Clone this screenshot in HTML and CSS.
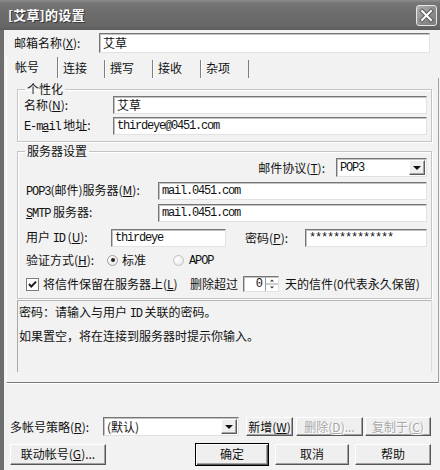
FILE: index.html
```html
<!DOCTYPE html>
<html lang="zh-CN">
<head>
<meta charset="utf-8">
<title>[艾草]的设置</title>
<link rel="stylesheet" href="styles.css">
</head>
<body>
<div class="window">
  <div class="titlebar">
    <span class="title">[艾草]的设置</span>
    <span class="close-btn">
      <svg width="21" height="21" viewBox="0 0 21 21">
        <path d="M6 6 L15 15 M15 6 L6 15" stroke="#5a5a5a" stroke-width="4" stroke-linecap="square"/>
        <path d="M6 6 L15 15 M15 6 L6 15" stroke="#ffffff" stroke-width="2" stroke-linecap="square"/>
      </svg>
    </span>
  </div>
  <div class="frame">
    <div class="row row-mailbox">
      <span class="lbl w-mailbox">邮箱名称(<u>X</u>):</span>
      <span class="field f-mailbox">艾草</span>
    </div>
    <div class="tabs">
      <span class="tab tab-active">帐号</span>
      <span class="tab tab-w47">连接</span>
      <span class="tab">撰写</span>
      <span class="tab">接收</span>
      <span class="tab">杂项</span>
    </div>
    <div class="panel">
      <fieldset class="group g-personal">
        <legend>个性化</legend>
        <div class="frow">
          <span class="lbl w-g1">名称(<u>N</u>):</span>
          <span class="field f-g1">艾草</span>
        </div>
        <div class="frow gap3">
          <span class="lbl w-g1"><span class="lat">E-m<u>a</u>il</span> 地址:</span>
          <span class="field f-g1"><span class="mono">thirdeye@0451.com</span></span>
        </div>
      </fieldset>
      <fieldset class="group g-server">
        <legend>服务器设置</legend>
        <div class="frow frow2 row-proto">
          <span class="lbl">邮件协议(<u>T</u>):</span>
          <span class="field select f-proto">
            <span class="mono sel-text">POP3</span>
            <span class="drop-btn"><span class="tri"></span></span>
          </span>
        </div>
        <div class="frow frow2 gap5">
          <span class="lbl w-pop"><span class="lat">POP3</span>(邮件)服务器(<u>M</u>):</span>
          <span class="field f-pop"><span class="mono">mail.0451.com</span></span>
        </div>
        <div class="frow frow2 gap4">
          <span class="lbl w-pop"><span class="lat"><u>S</u>MTP</span> 服务器:</span>
          <span class="field f-pop"><span class="mono">mail.0451.com</span></span>
        </div>
        <div class="frow frow2 gap7">
          <span class="lbl w-user">用户 <span class="lat">ID</span> (<u>U</u>):</span>
          <span class="field f-user"><span class="mono">thirdeye</span></span>
          <span class="lbl w-pass">密码(<u>P</u>):</span>
          <span class="field f-pass"><span class="mono">**************</span></span>
        </div>
        <div class="frow frow2 gap5 row-auth">
          <span class="lbl w-auth">验证方式(<u>H</u>):</span>
          <span class="radio radio-on"></span>
          <span class="opt">标准</span>
          <span class="radio radio-2"></span>
          <span class="opt"><span class="lat">APOP</span></span>
        </div>
        <div class="frow frow2 gap8 row-keep">
          <span class="checkbox">
            <svg width="13" height="13" viewBox="0 0 13 13">
              <rect x="0.5" y="0.5" width="12" height="12" fill="#ffffff" stroke="#7c7c7c"/>
              <path d="M3 6 L5.3 8.6 L10 3.6" fill="none" stroke="#1a1a1a" stroke-width="2"/>
            </svg>
          </span>
          <span class="keep-text">将信件保留在服务器上(<u>L</u>)</span>
          <span class="del-text">删除超过</span>
          <span class="field spin">
            <span class="spin-val">0</span>
            <span class="spin-btns">
              <svg width="13" height="14" viewBox="0 0 13 14">
                <line x1="0.5" y1="0" x2="0.5" y2="14" stroke="#9a9a9a"/>
                <line x1="1" y1="7" x2="13" y2="7" stroke="#9a9a9a"/>
                <path d="M5 4.5 L7 2.5 L9 4.5 Z" fill="#333"/>
                <path d="M5 9.5 L7 11.5 L9 9.5 Z" fill="#333"/>
              </svg>
            </span>
          </span>
          <span class="days-text">天的信件(0代表永久保留)</span>
        </div>
      </fieldset>
      <div class="desc">
        <p>密码：请输入与用户 <span class="lat">ID</span> 关联的密码。</p>
        <p>如果置空，将在连接到服务器时提示你输入。</p>
      </div>
    </div>
    <div class="row row-strategy">
      <span class="lbl w-strategy">多帐号策略(<u>R</u>):</span>
      <span class="field select f-strategy">
        <span class="sel-text">(默认)</span>
        <span class="drop-btn"><span class="tri"></span></span>
      </span>
      <span class="btn b-new">新增(<u>W</u>)</span>
      <span class="btn disabled b-del">删除(<u>D</u>)...</span>
      <span class="btn disabled b-copy">复制于(<u>C</u>)</span>
    </div>
    <div class="row row-buttons">
      <span class="btn b-link">联动帐号(<u>G</u>)...</span>
      <span class="btn default b-ok">确定</span>
      <span class="btn b-cancel">取消</span>
      <span class="btn b-help">帮助</span>
    </div>
  </div>
</div>
</body>
</html>
```

FILE: styles.css
```css
* {
  box-sizing: border-box;
}

html, body {
  margin: 0;
  padding: 0;
  background: #f2f2f2;
}

body {
  font-family: "Noto Sans CJK SC", "Noto Sans", sans-serif;
  font-size: 12px;
  line-height: 14px;
  color: #111;
}

u {
  text-decoration: underline;
  text-underline-offset: 1px;
}

.window {
  width: 440px;
  height: 470px;
  display: flex;
  flex-direction: column;
  overflow: hidden;
}

/* title bar */
.titlebar {
  height: 30px;
  flex: none;
  display: flex;
  align-items: center;
  justify-content: space-between;
  padding: 0 3px 0 8px;
  background: linear-gradient(#8e8e8e 0, #767676 3px, #6c6c6c 14px, #676767 26px, #5c5c5c 30px);
}

.title {
  color: #ffffff;
  font-weight: 700;
  font-size: 13px;
  letter-spacing: 0.3px;
  text-shadow: 1px 1px 0 #3a3a3a;
}

.close-btn {
  width: 21px;
  height: 21px;
  border: 1px solid #e6e6e6;
  border-radius: 3px;
  background: linear-gradient(135deg, #b0b0b0, #8a8a8a 60%, #7a7a7a);
  display: flex;
  align-items: center;
  justify-content: center;
  margin-top: 1px;
}

.close-btn svg {
  display: block;
  margin: -1px;
}

/* frame */
.frame {
  flex: 1;
  border-left: 4px solid #6e6e6e;
  background: #f2f2f2;
  display: flex;
  flex-direction: column;
}

.row {
  display: flex;
  align-items: center;
  flex: none;
}

.lbl {
  white-space: nowrap;
  flex: none;
}

.lat {
  font-family: "Liberation Mono", monospace;
  font-size: 12px;
  letter-spacing: -1.1px;
}

.mono {
  font-family: "Liberation Mono", monospace;
  font-size: 12px;
  letter-spacing: -1.2px;
}

.field {
  flex: none;
  display: flex;
  align-items: center;
  height: 18px;
  background: #ffffff;
  border: 1px solid;
  border-color: #767676 #e2e2e2 #e2e2e2 #767676;
  box-shadow: inset 1px 1px 0 #c2c2c2;
  padding-left: 3px;
  white-space: nowrap;
  overflow: hidden;
}

/* mailbox row */
.row-mailbox {
  margin-top: 3px;
  height: 20px;
  padding-left: 10px;
}

.w-mailbox {
  width: 85px;
}

.f-mailbox {
  width: 331px;
  height: 20px;
}

/* tabs */
.tabs {
  flex: none;
  display: flex;
  height: 21px;
  margin-top: 4px;
  padding-left: 2px;
}

.tab {
  width: 48px;
  margin-top: 3px;
  padding-left: 4px;
  border-left: 1px solid #ffffff;
  border-right: 1px solid #7e7e7e;
  display: flex;
  align-items: center;
  padding-bottom: 3px;
}

.tab-w47 {
  width: 47px;
}

.tab-active {
  width: 52px;
  margin-top: 0;
  padding-left: 8px;
  border-left: 1px solid #ffffff;
  padding-bottom: 2px;
}

/* panel */
.panel {
  flex: none;
  height: 305px;
  width: 433px;
  margin-left: 2px;
  border-left: 1px solid #ffffff;
  border-right: 1px solid #a2a2a2;
  border-bottom: 1px solid #7a7a7a;
  box-shadow: 0 1px 0 #ffffff;
  padding-left: 10px;
}

.group {
  margin: 0;
  padding: 0 4px 6px 0;
  min-width: 0;
  width: 415px;
  border: 1px solid #c4c4c4;
  box-shadow: inset 1px 1px 0 #ffffff, 1px 1px 0 #ffffff;
}

.group legend {
  padding: 0 2px;
  margin-left: 7px;
  line-height: 14px;
}

.g-personal {
  margin-top: 4px;
}

.g-server {
  margin-top: 2px;
}

.frow {
  display: flex;
  align-items: center;
  padding-left: 6px;
}

.frow2 {
  padding-left: 8px;
}

.gap3 { margin-top: 3px; }
.gap4 { margin-top: 4px; }
.gap5 { margin-top: 5px; }
.gap7 { margin-top: 7px; }
.gap8 { margin-top: 8px; }

.w-g1 {
  width: 89px;
}

.f-g1 {
  width: 314px;
}

/* server group */
.row-proto {
  justify-content: flex-end;
}

.select {
  padding-right: 0;
}

.sel-text {
  flex: 1;
}

.f-proto {
  width: 91px;
  height: 19px;
  margin-left: 11px;
}

.drop-btn {
  flex: none;
  width: 16px;
  height: 15px;
  margin-right: 1px;
  background: #efefef;
  border: 1px solid;
  border-color: #ffffff #5a5a5a #5a5a5a #ffffff;
  box-shadow: inset -1px -1px 0 #a4a4a4;
  display: flex;
  align-items: center;
  justify-content: center;
}

.tri {
  width: 0;
  height: 0;
  border-left: 4px solid transparent;
  border-right: 4px solid transparent;
  border-top: 4px solid #111;
  margin-left: -1px;
}

.w-pop {
  width: 132px;
}

.f-pop {
  width: 269px;
}

.w-user {
  width: 85px;
}

.f-user {
  width: 115px;
}

.w-pass {
  width: 60px;
  margin-left: 19px;
}

.f-pass {
  width: 122px;
}

.row-auth {
  height: 16px;
}

.w-auth {
  width: 81px;
}

.radio {
  flex: none;
  width: 11px;
  height: 11px;
  border-radius: 50%;
  border: 1px solid #a0a0a0;
  background: radial-gradient(circle at 35% 35%, #ffffff, #e4e4e4);
  display: flex;
  align-items: center;
  justify-content: center;
  margin-right: 4px;
}

.radio-on::after {
  content: "";
  width: 4px;
  height: 4px;
  border-radius: 50%;
  background: #222;
}

.radio-2 {
  margin-left: 27px;
  margin-right: 5px;
  border-color: #c0c0c0;
}

.row-keep {
  height: 16px;
}

.checkbox {
  flex: none;
  width: 13px;
  height: 13px;
  margin-right: 4px;
}

.checkbox svg {
  display: block;
}

.keep-text {
  width: 147px;
  flex: none;
  white-space: nowrap;
}

.del-text {
  width: 48px;
  flex: none;
  white-space: nowrap;
}

.spin {
  width: 36px;
  height: 16px;
  margin-left: 5px;
  padding-left: 0;
  justify-content: flex-end;
}

.spin-val {
  margin-right: 2px;
  font-family: "Liberation Mono", monospace;
  font-size: 12px;
}

.spin-btns {
  display: flex;
  height: 14px;
}

.spin-btns svg {
  display: block;
}

.days-text {
  margin-left: 6px;
  white-space: nowrap;
}

/* description */
.desc {
  margin-top: 1px;
  height: 72px;
  width: 415px;
  border-left: 1px solid #a8a8a8;
  border-top: 1px solid #b4b4b4;
  border-right: 1px solid #dcdcdc;
  padding-left: 1px;
}

.desc p {
  margin: 0;
  line-height: 22px;
  white-space: nowrap;
}

/* strategy row */
.row-strategy {
  margin-top: 34px;
  height: 19px;
  padding-left: 6px;
}

.w-strategy {
  width: 93px;
}

.f-strategy {
  width: 136px;
  height: 19px;
}

.btn {
  flex: none;
  display: flex;
  align-items: center;
  justify-content: center;
  height: 19px;
  background: #efefef;
  border: 1px solid;
  border-color: #ffffff #555555 #555555 #ffffff;
  box-shadow: inset -1px -1px 0 #a2a2a2;
  white-space: nowrap;
}

.btn.disabled {
  color: #a8a8a8;
  text-shadow: 1px 1px 0 #ffffff;
}

.b-new {
  width: 47px;
  margin-left: 7px;
}

.b-del {
  width: 67px;
  margin-left: 3px;
}

.b-copy {
  width: 66px;
  margin-left: 2px;
}

/* bottom buttons */
.row-buttons {
  margin-top: 7px;
  height: 22px;
  padding-left: 6px;
}

.row-buttons .btn {
  height: 21px;
}

.b-link {
  width: 96px;
}

.b-ok {
  width: 74px;
  margin-left: 89px;
}

.btn.default {
  height: 23px;
  border: 1px solid #000000;
  box-shadow: inset 1px 1px 0 #ffffff, inset -1px -1px 0 #555555, inset -2px -2px 0 #a2a2a2;
}

.b-cancel {
  width: 74px;
  margin-left: 6px;
}

.b-help {
  width: 76px;
  margin-left: 6px;
}
```
